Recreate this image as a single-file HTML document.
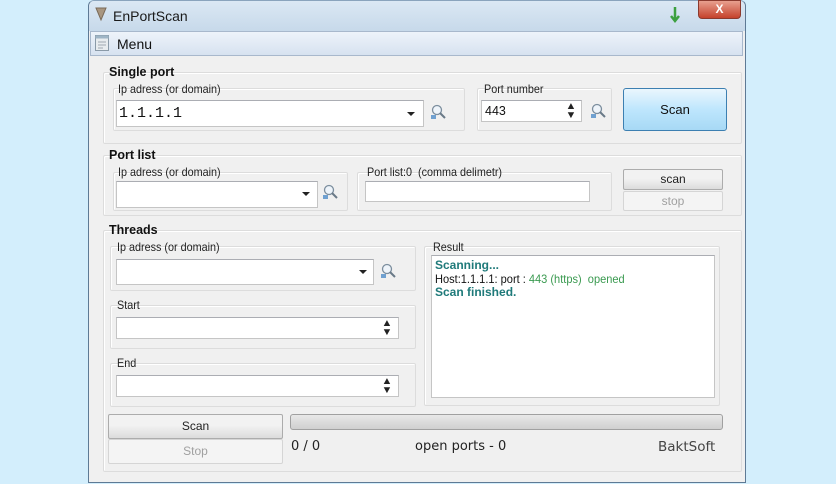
<!DOCTYPE html>
<html><head><meta charset="utf-8"><style>
*{box-sizing:border-box;margin:0;padding:0}
body{width:836px;height:484px;background:#d3eefc;position:relative;overflow:hidden;font-family:"Liberation Sans",sans-serif;font-size:12px;color:#111}
.a{position:absolute}
#win{left:88px;top:0;width:658px;height:483px;border:1px solid #5e7a95;border-top-color:#8aa4bd;background:#f0f0f0;border-radius:6px 6px 0 0}
#title{left:89px;top:1px;width:656px;height:30px;background:linear-gradient(#dbe8f4,#c7d9ea);border-radius:5px 5px 0 0}
#menu{left:90px;top:31px;width:653px;height:25px;background:linear-gradient(#eef3fa,#d7e2f0);border:1px solid #a8b8cc}
.grp{border:1px solid #dcdcdc;border-radius:2px;box-shadow:inset 1px 1px 0 #fff}
.inp{background:#fff;border:1px solid #c5c5c5;border-top-color:#abadb3}
.lbl{font-size:12px;color:#222;transform:scaleX(.9);transform-origin:left}
.b{font-weight:bold;font-size:12.5px}
.arr{width:0;height:0;border-left:4px solid transparent;border-right:4px solid transparent;border-top:4px solid #222}
.spin{font-size:10px;line-height:9px;color:#222;transform:scaleX(1.1)}
.btn{border:1px solid #acacac;border-radius:2px;background:linear-gradient(#f2f2f2 45%,#dcdcdc);text-align:center;color:#222}
.dis{border:1px solid #d5d5d5;border-radius:2px;background:#f4f4f4;text-align:center;color:#a0a0a0}
.mag{width:18px;height:18px}
</style></head><body>
<div class="a" id="win"></div>
<div class="a" id="title"></div>
<svg class="a" style="left:95px;top:6px" width="12" height="16"><path d="M1 2h10l-5 12z" fill="#a89680" stroke="#7a6a58"/></svg>
<div class="a" style="left:113px;top:8px;font-size:14px;color:#1a1a1a">EnPortScan</div>
<svg class="a" style="left:670px;top:6px" width="10" height="18"><path d="M5 1v13M1 10l4 5 4-5" stroke="#3ca040" stroke-width="2.5" fill="none"/></svg>
<div class="a" style="left:698px;top:0;width:43px;height:19px;background:linear-gradient(#e8a08f,#c5422c);border:1px solid #8b3a2e;border-radius:0 0 4px 4px;color:#fff;text-align:center;font-weight:bold;font-size:12px;line-height:17px">X</div>
<div class="a" id="menu"></div>
<svg class="a" style="left:95px;top:35px" width="15" height="17"><rect x="0.5" y="0.5" width="13" height="15" fill="#e8ecef" stroke="#8a9aa8"/><rect x="0.5" y="0.5" width="13" height="3" fill="#9fb5c6"/><path d="M3 7h8M3 10h8M3 13h5" stroke="#a0a8b0"/></svg>
<div class="a" style="left:117px;top:36px;font-size:14px">Menu</div>

<!-- Single port -->
<div class="a grp" style="left:103px;top:72px;width:639px;height:72px"></div>
<div class="a b" style="left:109px;top:65px">Single port</div>
<div class="a grp" style="left:113px;top:88px;width:352px;height:43px"></div>
<div class="a lbl" style="left:118px;top:82px">Ip adress (or domain)</div>
<div class="a inp" style="left:116px;top:100px;width:308px;height:27px"></div>
<div class="a" style="left:119px;top:105px;font-family:'Liberation Mono',monospace;font-size:15px">1.1.1.1</div>
<div class="a arr" style="left:407px;top:112px"></div>
<svg class="a mag" style="left:429px;top:103px"><circle cx="8" cy="7" r="4.5" fill="#eef4fa" stroke="#7c8e9e" stroke-width="1.3"/><path d="M11 10l5 5" stroke="#6a7a88" stroke-width="2"/><rect x="2" y="12" width="5" height="4" fill="#6fa0d0"/></svg>
<div class="a grp" style="left:477px;top:88px;width:135px;height:43px"></div>
<div class="a lbl" style="left:484px;top:82px">Port number</div>
<div class="a inp" style="left:481px;top:100px;width:101px;height:22px"></div>
<div class="a" style="left:485px;top:104px;font-size:12.5px">443</div>
<div class="a spin" style="left:566px;top:102px">▲<br>▼</div>
<svg class="a mag" style="left:589px;top:102px"><circle cx="8" cy="7" r="4.5" fill="#eef4fa" stroke="#7c8e9e" stroke-width="1.3"/><path d="M11 10l5 5" stroke="#6a7a88" stroke-width="2"/><rect x="2" y="12" width="5" height="4" fill="#6fa0d0"/></svg>
<div class="a" style="left:623px;top:88px;width:104px;height:43px;border:1px solid #3c7fb1;border-radius:3px;background:linear-gradient(#eaf6fd,#bee6fd 50%,#a7d9f5);text-align:center;line-height:41px;font-size:13px">Scan</div>

<!-- Port list -->
<div class="a grp" style="left:103px;top:155px;width:639px;height:61px"></div>
<div class="a b" style="left:109px;top:148px">Port list</div>
<div class="a grp" style="left:113px;top:172px;width:235px;height:39px"></div>
<div class="a lbl" style="left:118px;top:165px">Ip adress (or domain)</div>
<div class="a inp" style="left:116px;top:181px;width:202px;height:27px"></div>
<div class="a arr" style="left:302px;top:192px"></div>
<svg class="a mag" style="left:321px;top:183px"><circle cx="8" cy="7" r="4.5" fill="#eef4fa" stroke="#7c8e9e" stroke-width="1.3"/><path d="M11 10l5 5" stroke="#6a7a88" stroke-width="2"/><rect x="2" y="12" width="5" height="4" fill="#6fa0d0"/></svg>
<div class="a grp" style="left:357px;top:172px;width:255px;height:39px"></div>
<div class="a lbl" style="left:367px;top:165px">Port list:0 &nbsp;(comma delimetr)</div>
<div class="a inp" style="left:365px;top:181px;width:225px;height:21px"></div>
<div class="a btn" style="left:623px;top:169px;width:100px;height:21px;line-height:19px">scan</div>
<div class="a dis" style="left:623px;top:191px;width:100px;height:20px;line-height:18px">stop</div>

<!-- Threads -->
<div class="a grp" style="left:103px;top:230px;width:639px;height:242px"></div>
<div class="a b" style="left:109px;top:223px">Threads</div>
<div class="a grp" style="left:110px;top:246px;width:306px;height:45px"></div>
<div class="a lbl" style="left:117px;top:240px">Ip adress (or domain)</div>
<div class="a inp" style="left:116px;top:259px;width:258px;height:26px"></div>
<div class="a arr" style="left:359px;top:270px"></div>
<svg class="a mag" style="left:379px;top:262px"><circle cx="8" cy="7" r="4.5" fill="#eef4fa" stroke="#7c8e9e" stroke-width="1.3"/><path d="M11 10l5 5" stroke="#6a7a88" stroke-width="2"/><rect x="2" y="12" width="5" height="4" fill="#6fa0d0"/></svg>
<div class="a grp" style="left:110px;top:305px;width:306px;height:44px"></div>
<div class="a lbl" style="left:117px;top:298px">Start</div>
<div class="a inp" style="left:116px;top:317px;width:283px;height:22px"></div>
<div class="a spin" style="left:382px;top:319px">▲<br>▼</div>
<div class="a grp" style="left:110px;top:363px;width:306px;height:44px"></div>
<div class="a lbl" style="left:117px;top:356px">End</div>
<div class="a inp" style="left:116px;top:375px;width:283px;height:22px"></div>
<div class="a spin" style="left:382px;top:377px">▲<br>▼</div>
<div class="a grp" style="left:424px;top:246px;width:296px;height:160px"></div>
<div class="a lbl" style="left:433px;top:240px">Result</div>
<div class="a inp" style="left:431px;top:255px;width:284px;height:143px"></div>
<div class="a" style="left:435px;top:259px;font-size:12px;line-height:13.5px">
<div style="color:#1f7a7a;font-weight:bold">Scanning...</div>
<div style="transform:scaleX(.92);transform-origin:left;white-space:nowrap">Host:1.1.1.1: port : <span style="color:#3a9a50">443 (https) &nbsp;opened</span></div>
<div style="color:#1f7a7a;font-weight:bold">Scan finished.</div></div>
<div class="a btn" style="left:108px;top:414px;width:175px;height:25px;line-height:23px">Scan</div>
<div class="a dis" style="left:108px;top:439px;width:175px;height:25px;line-height:23px">Stop</div>
<div class="a" style="left:290px;top:414px;width:433px;height:16px;border:1px solid #a0a0a0;border-radius:3px;background:linear-gradient(#e8e8e8,#cfcfcf)"></div>
<div class="a" style="left:291px;top:439px;font-family:'DejaVu Sans',sans-serif;font-size:13px;color:#222">0 / 0</div>
<div class="a" style="left:415px;top:439px;font-family:'DejaVu Sans',sans-serif;font-size:13px;color:#222">open ports - 0</div>
<div class="a" style="left:658px;top:439px;font-family:'DejaVu Sans',sans-serif;font-size:13.5px;color:#444">BaktSoft</div>
</body></html>
